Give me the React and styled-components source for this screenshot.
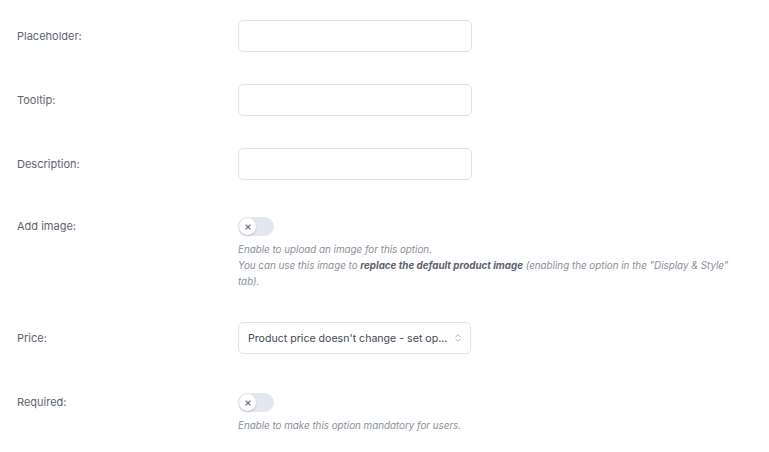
import React from 'react';
import styled, {createGlobalStyle} from 'styled-components';
import {ChevronsUpDown, X} from 'lucide-react';

const GlobalStyle = createGlobalStyle`
  html, body {
    margin: 0;
    padding: 0;
    background: #fff;
  }
  body {
    font-family: Inter, "Noto Sans", "Liberation Sans", sans-serif;
    -webkit-font-smoothing: antialiased;
  }
`;

const Panel = styled.div`
  width: 769px;
  height: 452px;
  box-sizing: border-box;
  padding: 20px 0 0 17px;
  overflow: hidden;
`;

const Row = styled.div`
  display: flex;
  align-items: flex-start;
  margin-bottom: ${(p) => p.$gap}px;
`;

const Label = styled.div`
  width: 221px;
  flex: none;
  font-size: 11px;
  font-weight: 400;
  color: #5d6472;
  line-height: ${(p) => p.$h}px;
`;

const Control = styled.div`
  display: flex;
  flex-direction: column;
  align-items: flex-start;
`;

const TextInput = styled.input`
  width: 234px;
  height: 32px;
  box-sizing: border-box;
  border: 1px solid #e1e3ea;
  border-radius: 5px;
  background: #fff;
  outline: none;
`;

const Select = styled.div`
  width: 233px;
  height: 32px;
  box-sizing: border-box;
  border: 1px solid #e1e3ea;
  border-radius: 5px;
  display: flex;
  align-items: center;
  justify-content: space-between;
  gap: 4px;
  padding: 0 7px 0 9px;
  font-size: 10.6px;
  color: #434957;
  white-space: nowrap;
  span {
    overflow: hidden;
  }
  svg {
    flex: none;
    color: #9aa1ae;
  }
`;

const Toggle = styled.div`
  width: 36px;
  height: 19px;
  border-radius: 10px;
  background: #e3e7ef;
  position: relative;
`;

const Knob = styled.span`
  position: absolute;
  left: 1px;
  top: 1px;
  width: 17px;
  height: 17px;
  border-radius: 50%;
  background: #fff;
  box-shadow: 0 1px 2px rgba(40, 50, 80, 0.25);
  display: flex;
  align-items: center;
  justify-content: center;
  color: #6f788c;
`;

const Help = styled.p`
  margin: 6px 0 0;
  max-width: 505px;
  font-size: 9.8px;
  font-style: italic;
  line-height: 16px;
  color: #8a8f99;
  b {
    color: #5b616d;
    font-weight: 700;
  }
`;

const Switch = () => (
  <Toggle>
    <Knob>
      <X size={8} strokeWidth={3.5} />
    </Knob>
  </Toggle>
);

export default function App() {
  return (
    <>
      <GlobalStyle />
      <Panel>
        <Row $gap={32}>
          <Label $h={32}>Placeholder:</Label>
          <TextInput />
        </Row>
        <Row $gap={32}>
          <Label $h={32}>Tooltip:</Label>
          <TextInput />
        </Row>
        <Row $gap={37}>
          <Label $h={32}>Description:</Label>
          <TextInput />
        </Row>
        <Row $gap={32}>
          <Label $h={19}>Add image:</Label>
          <Control>
            <Switch />
            <Help>
              Enable to upload an image for this option.
              <br />
              You can use this image to <b>replace the default product image</b> (enabling the option in the "Display &amp; Style" tab).
            </Help>
          </Control>
        </Row>
        <Row $gap={39}>
          <Label $h={32}>Price:</Label>
          <Select>
            <span>Product price doesn't change - set op...</span>
            <ChevronsUpDown size={10} strokeWidth={2} />
          </Select>
        </Row>
        <Row $gap={0}>
          <Label $h={19}>Required:</Label>
          <Control>
            <Switch />
            <Help>Enable to make this option mandatory for users.</Help>
          </Control>
        </Row>
      </Panel>
    </>
  );
}
